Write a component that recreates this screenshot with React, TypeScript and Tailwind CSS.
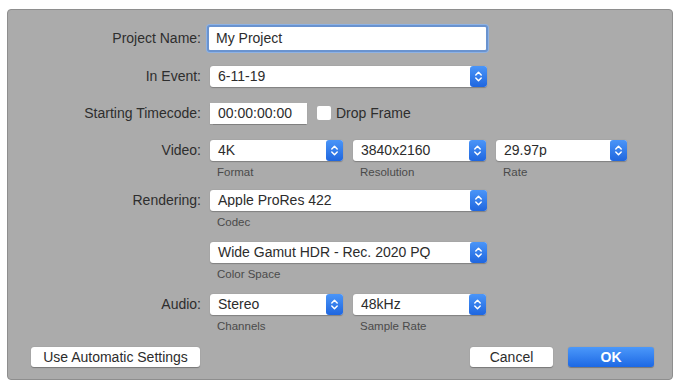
import React from "react";

const font = { fontFamily: '"Liberation Sans", Arial, sans-serif' };

function Stepper() {
  return (
    <div className="flex h-full w-[17px] shrink-0 items-center justify-center rounded-[3px] bg-gradient-to-b from-[#4a95f8] to-[#1f66df]">
      <svg width="9" height="13" viewBox="0 0 9 13" fill="none">
        <path d="M1.8 5 L4.5 2.3 L7.2 5" stroke="white" strokeWidth="1.5" strokeLinecap="round" strokeLinejoin="round" />
        <path d="M1.8 8 L4.5 10.7 L7.2 8" stroke="white" strokeWidth="1.5" strokeLinecap="round" strokeLinejoin="round" />
      </svg>
    </div>
  );
}

function Select({ value, width }: { value: string; width: string }) {
  return (
    <div className={`flex h-[21px] items-center rounded-[3px] bg-white shadow-[0_0.5px_1px_rgba(0,0,0,0.25)] ${width}`}>
      <span className="flex-1 truncate pl-[8px] text-[14px] leading-none text-[#2c2c2c]">{value}</span>
      <Stepper />
    </div>
  );
}

function SubLabel({ text, width }: { text: string; width: string }) {
  return (
    <div className={`h-[18px] pl-[7px] pt-[4px] text-[11.5px] leading-[14px] text-[#4a4a4a] ${width}`}>{text}</div>
  );
}

function Label({ text }: { text: string }) {
  return (
    <div className="w-[193px] shrink-0 text-right text-[14px] leading-none text-[#2e2e2e]">{text}</div>
  );
}

export default function App() {
  return (
    <div className="h-[384px] w-[676px] bg-white pl-[7px] pt-[9px]" style={font}>
      <div className="flex h-[371px] w-[666px] flex-col rounded-[4px] border border-[#8e8e8e] bg-[#ababab] pt-[17px]">
        {/* Project Name */}
        <div className="flex h-[22px] items-center">
          <Label text="Project Name:" />
          <div className="ml-[6px] flex h-[27px] w-[281px] items-center rounded-[3px] border-[2px] border-[#6a93cf] bg-white shadow-[0_0_0_1px_#8eb2e3]">
            <span className="pl-[7px] text-[14px] leading-none text-[#2c2c2c]">My Project</span>
          </div>
        </div>

        {/* In Event */}
        <div className="mt-[16px] flex h-[22px] items-center">
          <Label text="In Event:" />
          <div className="ml-[9px]">
            <Select value="6-11-19" width="w-[277px]" />
          </div>
        </div>

        {/* Starting Timecode */}
        <div className="mt-[15px] flex h-[22px] items-center">
          <Label text="Starting Timecode:" />
          <div className="ml-[9px] flex h-[21px] w-[97px] items-center bg-white shadow-[0_0.5px_1px_rgba(0,0,0,0.25)]">
            <span className="pl-[8px] text-[14px] leading-none text-[#2c2c2c]">00:00:00:00</span>
          </div>
          <div className="ml-[10px] h-[14px] w-[14px] rounded-[2px] bg-white" />
          <span className="ml-[5px] text-[14px] leading-none text-[#2e2e2e]">Drop Frame</span>
        </div>

        {/* Video */}
        <div className="mt-[15px] flex items-start">
          <div className="flex h-[22px] items-center">
            <Label text="Video:" />
          </div>
          <div className="ml-[9px] flex gap-[10px]">
            <div className="flex flex-col">
              <div className="flex h-[22px] items-center"><Select value="4K" width="w-[133px]" /></div>
              <SubLabel text="Format" width="w-[133px]" />
            </div>
            <div className="flex flex-col">
              <div className="flex h-[22px] items-center"><Select value="3840x2160" width="w-[133px]" /></div>
              <SubLabel text="Resolution" width="w-[133px]" />
            </div>
            <div className="flex flex-col">
              <div className="flex h-[22px] items-center"><Select value="29.97p" width="w-[131px]" /></div>
              <SubLabel text="Rate" width="w-[131px]" />
            </div>
          </div>
        </div>

        {/* Rendering */}
        <div className="mt-[10px] flex items-start">
          <div className="flex h-[22px] items-center">
            <Label text="Rendering:" />
          </div>
          <div className="ml-[9px] flex flex-col">
            <div className="flex h-[22px] items-center"><Select value="Apple ProRes 422" width="w-[277px]" /></div>
            <SubLabel text="Codec" width="w-[277px]" />
          </div>
        </div>

        {/* Color Space */}
        <div className="mt-[12px] flex items-start">
          <div className="w-[193px] shrink-0" />
          <div className="ml-[9px] flex flex-col">
            <div className="flex h-[22px] items-center"><Select value="Wide Gamut HDR - Rec. 2020 PQ" width="w-[277px]" /></div>
            <SubLabel text="Color Space" width="w-[277px]" />
          </div>
        </div>

        {/* Audio */}
        <div className="mt-[12px] flex items-start">
          <div className="flex h-[22px] items-center">
            <Label text="Audio:" />
          </div>
          <div className="ml-[9px] flex gap-[10px]">
            <div className="flex flex-col">
              <div className="flex h-[22px] items-center"><Select value="Stereo" width="w-[133px]" /></div>
              <SubLabel text="Channels" width="w-[133px]" />
            </div>
            <div className="flex flex-col">
              <div className="flex h-[22px] items-center"><Select value="48kHz" width="w-[133px]" /></div>
              <SubLabel text="Sample Rate" width="w-[133px]" />
            </div>
          </div>
        </div>

        {/* Buttons */}
        <div className="mt-[14px] flex h-[20px] items-center pl-[23px] pr-[18px]">
          <button className="flex h-[20px] w-[169px] items-center justify-center rounded-[3px] bg-white text-[14px] leading-none text-[#2c2c2c] shadow-[0_0.5px_1px_rgba(0,0,0,0.3)]">
            Use Automatic Settings
          </button>
          <div className="flex-1" />
          <button className="flex h-[20px] w-[83px] items-center justify-center rounded-[3px] bg-white text-[14px] leading-none text-[#2c2c2c] shadow-[0_0.5px_1px_rgba(0,0,0,0.3)]">
            Cancel
          </button>
          <button className="ml-[15px] flex h-[20px] w-[86px] items-center justify-center rounded-[3px] bg-gradient-to-b from-[#4b98fa] to-[#1d68e4] text-[14px] font-bold leading-none text-white shadow-[0_0.5px_1px_rgba(0,0,0,0.3)]">
            OK
          </button>
        </div>
      </div>
    </div>
  );
}
